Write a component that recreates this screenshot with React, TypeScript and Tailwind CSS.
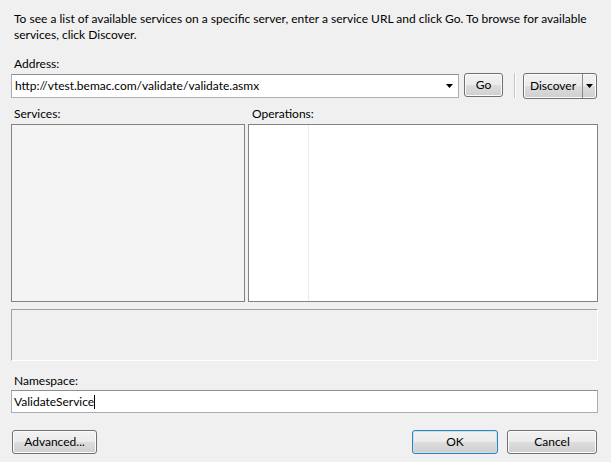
import React from 'react';

const font = { fontFamily: 'Lato, "Noto Sans", sans-serif' };

function Button({ label, width, primary }: { label: string; width: string; primary?: boolean }) {
  return (
    <button
      type="button"
      className={`${width} h-[24px] rounded-[3px] border text-[12px] text-black flex items-center justify-center bg-[linear-gradient(#f2f2f2_0%,#ebebeb_50%,#dddddd_50%,#cfcfcf_100%)] ${
        primary
          ? 'border-[#3c7fb1] shadow-[inset_0_0_0_1px_#bfe4f8]'
          : 'border-[#707070] shadow-[inset_0_0_0_1px_#fcfcfc]'
      }`}
    >
      {label}
    </button>
  );
}

function Arrow() {
  return (
    <svg width="7" height="4" viewBox="0 0 7 4">
      <path d="M0 0h7L3.5 4z" fill="#000" />
    </svg>
  );
}

export default function App() {
  return (
    <div className="w-[611px] h-[462px] bg-[#f0f0f0] text-[12px] text-black overflow-hidden" style={font}>
      {/* Intro text */}
      <p className="pt-[11px] pl-[14px] pr-[10px] leading-[16px]">
        To see a list of available services on a specific server, enter a service URL and click Go. To browse for available
        services, click Discover.
      </p>

      {/* Address */}
      <div className="mt-[13px] pl-[14px] leading-[16px]">Address:</div>
      <div className="mt-[1px] ml-[11px] flex items-start">
        <div className="mt-[1px] w-[448px] h-[24px] bg-white border border-[#abadb3] border-t-[#8d8f94] flex items-center pl-[3px] pr-[5px]">
          <span className="flex-1">http://vtest.bemac.com/validate/validate.asmx</span>
          <Arrow />
        </div>
        <div className="ml-[5px]">
          <Button label="Go" width="w-[39px]" />
        </div>
        <div className="ml-[11px] w-[2px] h-[25px] border-l border-[#c5c5c5] border-r border-r-white" />
        <div className="ml-[7px] w-[74px] h-[26px] rounded-[3px] border border-[#707070] bg-[linear-gradient(#f2f2f2_0%,#ebebeb_50%,#dddddd_50%,#cfcfcf_100%)] shadow-[inset_0_0_0_1px_#fcfcfc] flex">
          <div className="w-[59px] flex items-center justify-center border-r border-[#8a8a8a]">Discover</div>
          <div className="flex-1 flex items-center justify-center">
            <Arrow />
          </div>
        </div>
      </div>

      {/* Services / Operations */}
      <div className="mt-[7px] ml-[11px] flex gap-[3px] leading-[16px]">
        <div className="w-[234px]">
          <div className="pl-[3px]">Services:</div>
          <div className="mt-[2px] h-[178px] bg-[#f4f4f4] border border-[#828282]" />
        </div>
        <div className="w-[350px]">
          <div className="pl-[4px]">Operations:</div>
          <div className="mt-[2px] h-[178px] bg-white border border-[#828282] flex">
            <div className="w-[60px] border-r border-[#ececec]" />
          </div>
        </div>
      </div>

      {/* Status panel */}
      <div className="mt-[7px] ml-[11px] w-[587px] h-[52px] border border-t-[#a0a0a0] border-l-[#a0a0a0] border-b-white border-r-white" />

      {/* Namespace */}
      <div className="mt-[12px] pl-[14px] leading-[16px]">Namespace:</div>
      <div className="mt-[1px] ml-[11px] w-[587px] h-[23px] bg-white border border-[#abadb3] border-t-[#8d8f94] flex items-center pl-[2px]">
        <span>ValidateService</span>
        <span className="w-[1px] h-[14px] bg-black" />
      </div>

      {/* Footer buttons */}
      <div className="mt-[17px] flex items-center pl-[12px] pr-[14px]">
        <Button label="Advanced..." width="w-[85px]" />
        <div className="flex-1" />
        <Button label="OK" width="w-[86px]" primary />
        <div className="w-[9px]" />
        <Button label="Cancel" width="w-[90px]" />
      </div>
    </div>
  );
}
